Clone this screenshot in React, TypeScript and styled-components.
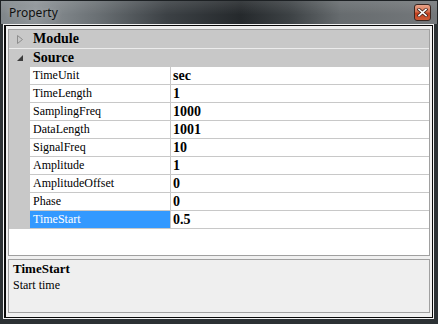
import React from 'react';
import styled, { createGlobalStyle } from 'styled-components';

const Global = createGlobalStyle`
  html, body { margin: 0; padding: 0; background: #2c3134; }
  body { width: 438px; height: 324px; overflow: hidden; }
  #root { width: 438px; height: 324px; }
`;

const Window = styled.div`
  width: 438px;
  height: 324px;
  box-sizing: border-box;
  background: #2c3134;
  display: flex;
  flex-direction: column;
`;

const TitleBar = styled.div`
  height: 24px;
  flex: none;
  display: flex;
  align-items: center;
  justify-content: space-between;
  padding: 0 6px 2px 8px;
  box-sizing: border-box;
  background:
    linear-gradient(180deg, rgba(255,255,255,0.10) 0%, rgba(255,255,255,0) 60%),
    linear-gradient(90deg, #80868a 0%, #8d9397 8%, #6a7074 22%, #3c4145 38%, #25292c 55%, #3c4144 66%, #676c6f 78%, #74787b 100%);
  border-top: 1px solid #1d2124;
  border-left: 1px solid #1d2124;
  border-right: 1px solid #1d2124;
`;

const Title = styled.span`
  font-family: "Noto Sans", "Liberation Sans", sans-serif;
  font-size: 12px;
  color: #101010;
  text-shadow: 0 0 6px rgba(255,255,255,0.35);
  line-height: 16px;
  margin-top: 2px;
`;

const CloseButton = styled.div`
  width: 17px;
  height: 17px;
  box-sizing: border-box;
  margin-top: 2px;
  border: 1px solid #3a2620;
  border-radius: 3px;
  background: linear-gradient(180deg, #e9a48a 0%, #d8704f 45%, #c2401f 55%, #cf5a36 100%);
  display: flex;
  align-items: center;
  justify-content: center;
`;

const Body = styled.div`
  flex: 1;
  display: flex;
  padding: 0 4px 5px 3px;
  min-height: 0;
`;

const Frame = styled.div`
  flex: 1;
  display: flex;
  border: 1px solid #f2f2f2;
  min-height: 0;
`;

const Client = styled.div`
  flex: 1;
  display: flex;
  flex-direction: column;
  gap: 3px;
  background: #f0f0f0;
  border: 1px solid #0a0a0a;
  border-left-width: 2px;
  padding: 3px 2px 4px 2px;
  min-height: 0;
`;

const Grid = styled.div`
  height: 227px;
  box-sizing: border-box;
  border: 1px solid #a0a0a0;
  background: #ffffff;
  display: flex;
  flex-direction: column;
  overflow: hidden;
`;

const CategoryRow = styled.div<{ $sep?: boolean }>`
  height: 18px;
  flex: none;
  display: grid;
  grid-template-columns: 21px 1fr;
  align-items: center;
  background: #c8c8c8;
  border-bottom: ${p => (p.$sep ? '1px solid #ececec' : 'none')};
`;

const Expander = styled.div`
  display: flex;
  align-items: center;
  justify-content: center;
  padding-left: 1px;
  height: 18px;
`;

const CategoryLabel = styled.span`
  font-family: "Liberation Serif", "DejaVu Serif", serif;
  font-weight: bold;
  font-size: 14px;
  color: #000;
  padding-left: 3px;
  line-height: 18px;
`;

const DataRow = styled.div`
  height: 18px;
  flex: none;
  display: grid;
  grid-template-columns: 21px 141px 1fr;
`;

const Gutter = styled.div`
  background: #c8c8c8;
`;

const NameCell = styled.div<{ $selected?: boolean }>`
  box-sizing: border-box;
  border-bottom: 1px solid #c8c8c8;
  border-right: 1px solid #c8c8c8;
  background: ${p => (p.$selected ? '#3399ff' : '#ffffff')};
  color: ${p => (p.$selected ? '#ffffff' : '#000000')};
  font-family: "Liberation Serif", "DejaVu Serif", serif;
  font-size: 12px;
  line-height: 17px;
  padding-left: 3px;
  white-space: nowrap;
  overflow: hidden;
`;

const ValueCell = styled.div`
  box-sizing: border-box;
  border-bottom: 1px solid #c8c8c8;
  font-family: "Liberation Serif", "DejaVu Serif", serif;
  font-weight: bold;
  font-size: 14px;
  line-height: 17px;
  padding-left: 2px;
  color: #000;
`;

const HelpBox = styled.div`
  height: 54px;
  box-sizing: border-box;
  border: 1px solid #a0a0a0;
  background: #efefef;
  padding: 0 4px;
  display: flex;
  flex-direction: column;
`;

const HelpTitle = styled.span`
  font-family: "Liberation Serif", "DejaVu Serif", serif;
  font-weight: bold;
  font-size: 13px;
  line-height: 17px;
  color: #000;
`;

const HelpText = styled.span`
  font-family: "Liberation Serif", "DejaVu Serif", serif;
  font-size: 12px;
  line-height: 17px;
  color: #000;
`;

const rows: [string, string][] = [
  ['TimeUnit', 'sec'],
  ['TimeLength', '1'],
  ['SamplingFreq', '1000'],
  ['DataLength', '1001'],
  ['SignalFreq', '10'],
  ['Amplitude', '1'],
  ['AmplitudeOffset', '0'],
  ['Phase', '0'],
  ['TimeStart', '0.5'],
];

const CollapsedIcon = () => (
  <svg width="6" height="9" viewBox="0 0 6 9">
    <polygon points="0.5,0.5 5.5,4.5 0.5,8.5" fill="none" stroke="#8c8c8c" strokeWidth="1" />
  </svg>
);

const ExpandedIcon = () => (
  <svg width="6" height="6" viewBox="0 0 6 6">
    <polygon points="6,0 6,6 0,6" fill="#3c3c3c" />
  </svg>
);

const CloseGlyph = () => (
  <svg width="11" height="9" viewBox="0 0 11 9">
    <path d="M2 1.5 L9 7.5 M9 1.5 L2 7.5" stroke="#4a2a22" strokeWidth="3.2" strokeLinecap="square" />
    <path d="M2 1.5 L9 7.5 M9 1.5 L2 7.5" stroke="#ffffff" strokeWidth="1.6" strokeLinecap="square" />
  </svg>
);

export default function App() {
  return (
    <>
      <Global />
      <Window>
        <TitleBar>
          <Title>Property</Title>
          <CloseButton>
            <CloseGlyph />
          </CloseButton>
        </TitleBar>
        <Body>
          <Frame>
            <Client>
              <Grid>
                <CategoryRow $sep>
                  <Expander><CollapsedIcon /></Expander>
                  <CategoryLabel>Module</CategoryLabel>
                </CategoryRow>
                <CategoryRow>
                  <Expander><ExpandedIcon /></Expander>
                  <CategoryLabel>Source</CategoryLabel>
                </CategoryRow>
                {rows.map(([name, value]) => (
                  <DataRow key={name}>
                    <Gutter />
                    <NameCell $selected={name === 'TimeStart'}>{name}</NameCell>
                    <ValueCell>{value}</ValueCell>
                  </DataRow>
                ))}
              </Grid>
              <HelpBox>
                <HelpTitle>TimeStart</HelpTitle>
                <HelpText>Start time</HelpText>
              </HelpBox>
            </Client>
          </Frame>
        </Body>
      </Window>
    </>
  );
}
